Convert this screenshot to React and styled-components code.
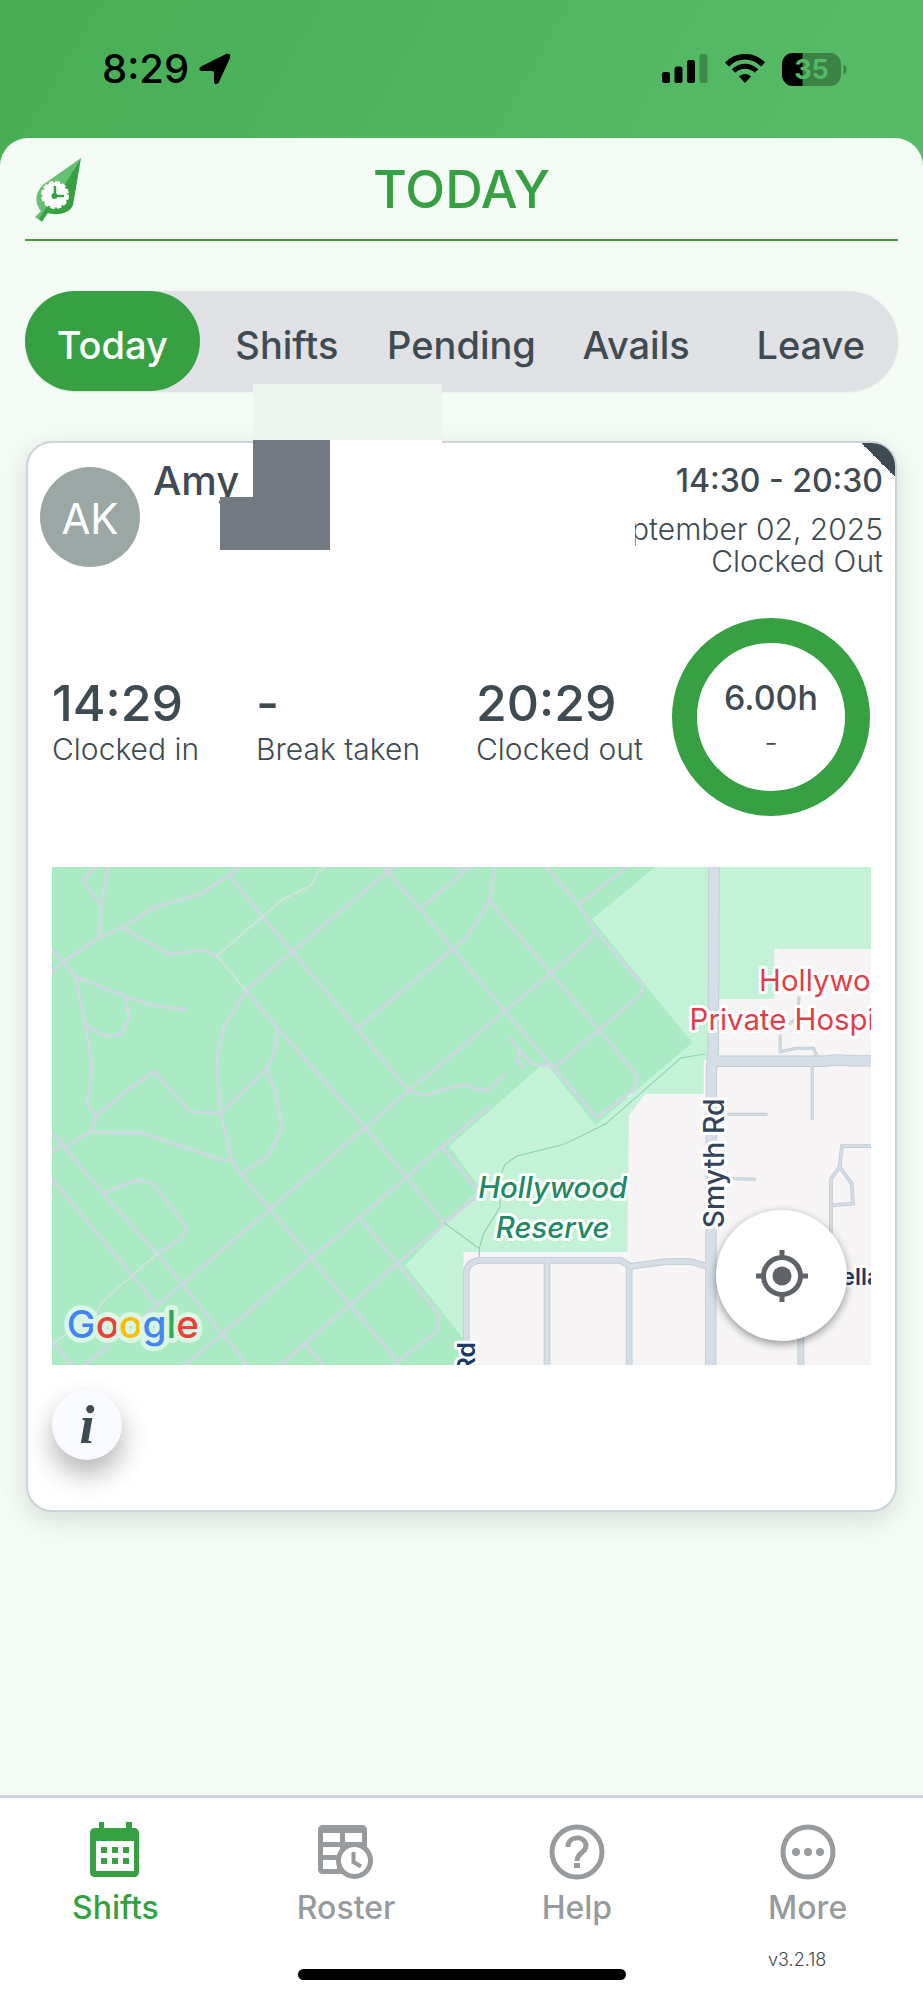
import styled, { createGlobalStyle } from "styled-components";

const GlobalStyle = createGlobalStyle`
  * {
    box-sizing: border-box;
  }

  body {
    margin: 0;
    background: #f4faf4;
    color: #3f4b52;
    font-family: Inter, "Open Sans", sans-serif;
  }

  button {
    border: 0;
    padding: 0;
    background: none;
    color: inherit;
    font: inherit;
    cursor: pointer;
  }
`;

const Screen = styled.div`
  display: flex;
  flex-direction: column;
  min-height: 100vh;
  background: linear-gradient(120deg, #48ae55 0, #56bb67 800px);
`;

const StatusBar = styled.div`
  display: flex;
  align-items: center;
  justify-content: space-between;
  height: 138px;
  padding: 0 76px 0 102px;
  color: #000;
`;

const StatusGroup = styled.div`
  display: flex;
  align-items: center;
  gap: ${(props) => props.$gap}px;
`;

const Clock = styled.span`
  font-size: 40px;
  font-weight: 500;
  line-height: 48px;
`;

const Sheet = styled.main`
  flex: 1;
  display: flex;
  flex-direction: column;
  border-radius: 28px 28px 0 0;
  background: #f4faf4;
`;

const Header = styled.header`
  display: grid;
  grid-template-columns: 68px 1fr 68px;
  align-items: center;
  height: 103px;
  margin: 0 25px;
  padding-top: 2px;
  border-bottom: 2px solid #36a043;

  svg {
    justify-self: center;
  }
`;

const Title = styled.h1`
  margin: 0;
  text-align: center;
  font-size: 52px;
  font-weight: 500;
  line-height: 60px;
  color: #36a043;
`;

const Tabs = styled.nav`
  display: grid;
  grid-template-columns: repeat(5, 1fr);
  height: 100px;
  margin: 50px 25px 0;
  border-radius: 50px;
  background: #e0e1e5;
  box-shadow: 0 1px 2px #0000001c;
`;

const Tab = styled.button`
  padding-top: 8px;
  border-radius: 50px;
  background: ${(props) => (props.$active ? "#36a043" : "transparent")};
  color: ${(props) => (props.$active ? "#fff" : "#3f4b52")};
  font-size: 38px;
  font-weight: 500;
`;

const Card = styled.article`
  position: relative;
  display: flex;
  flex-direction: column;
  margin: 50px 26px 0;
  padding: 24px 24px 50px;
  border: 2px solid #cdd3db;
  border-radius: 26px;
  background: #fff;
  box-shadow: 0 8px 28px #0000001f;
`;

const Corner = styled.span`
  position: absolute;
  top: 0;
  right: 0;
  width: 34px;
  height: 34px;
  border-top-right-radius: 23px;
  background: linear-gradient(45deg, transparent 50%, #3f4b52 50%);
`;

// blocks that hide the surname
const Mask = styled.span`
  position: absolute;
  left: ${(props) => props.$x}px;
  top: ${(props) => props.$y}px;
  width: ${(props) => props.$w}px;
  height: ${(props) => props.$h}px;
  background: ${(props) => props.$color};
`;

const CardTop = styled.div`
  display: flex;
  justify-content: space-between;
  height: 150px;
  margin: 0 -12px;
`;

const Person = styled.div`
  display: flex;
  gap: 13px;
`;

const Avatar = styled.div`
  width: 100px;
  height: 100px;
  border-radius: 50%;
  background: #9aa7a5;
  color: #fff;
  font-size: 42px;
  font-weight: 400;
  line-height: 104px;
  text-align: center;
`;

const Name = styled.h2`
  margin: 0;
  font-size: 40px;
  font-weight: 500;
  line-height: 28px;
`;

const When = styled.div`
  width: 248px;
  text-align: right;
`;

const Hours = styled.div`
  font-size: 32px;
  font-weight: 500;
  line-height: 28px;
  white-space: nowrap;
`;

const DateLine = styled.div`
  display: flex;
  justify-content: flex-end;
  overflow: hidden;
  margin-top: 16px;
  font-size: 30px;
  font-weight: 300;
  line-height: 36px;
  white-space: nowrap;
`;

const State = styled.div`
  font-size: 30px;
  font-weight: 300;
  line-height: 28px;
`;

const Stats = styled.div`
  display: grid;
  grid-template-columns: 204px 220px 1fr 199px;
  align-items: center;
  height: 200px;
`;

const Stat = styled.div`
  padding-top: 12px;
  white-space: nowrap;
`;

const StatValue = styled.div`
  font-size: 50px;
  font-weight: 500;
  line-height: 52px;
`;

const StatLabel = styled.div`
  font-size: 30px;
  font-weight: 300;
  line-height: 40px;
`;

const Ring = styled.div`
  display: flex;
  flex-direction: column;
  align-items: center;
  justify-content: center;
  width: 198px;
  height: 198px;
  padding-top: 6px;
  border: 25px solid #36a043;
  border-radius: 50%;
`;

const RingValue = styled.div`
  font-size: 34px;
  font-weight: 500;
  line-height: 44px;
`;

const RingNote = styled.div`
  font-size: 30px;
  font-weight: 300;
  line-height: 44px;
`;

const MapBox = styled.div`
  position: relative;
  height: 498px;
  margin-top: 50px;

  > svg {
    display: block;
    width: 100%;
    height: 100%;
  }
`;

const LocateButton = styled.button`
  position: absolute;
  right: 24px;
  bottom: 24px;
  display: grid;
  place-items: center;
  width: 131px;
  height: 131px;
  border-radius: 50%;
  background: #fff;
  box-shadow: 0 3px 9px #00000066;
`;

const InfoButton = styled.button`
  width: 70px;
  height: 70px;
  margin-top: 25px;
  border-radius: 50%;
  background: #f9faff;
  box-shadow: 0 14px 28px #0000004d;
  font-family: "Liberation Serif", serif;
  font-size: 54px;
  font-style: italic;
  font-weight: 700;
  line-height: 70px;
`;

const BottomBar = styled.footer`
  margin-top: auto;
  padding-bottom: 20px;
  border-top: 3px solid #cdd1dc;
  background: #fff;
`;

const BottomNav = styled.nav`
  display: grid;
  grid-template-columns: repeat(4, 1fr);
`;

const NavItem = styled.button`
  display: flex;
  flex-direction: column;
  align-items: center;
  padding-top: 20px;
  color: ${(props) => (props.$active ? "#36a043" : "#979b9e")};
  font-size: 32px;
  font-weight: 500;
  line-height: 40px;

  svg {
    margin-bottom: 8px;
  }
`;

const Foot = styled.div`
  display: grid;
  grid-template-columns: 1fr 328px 1fr;
  margin-top: 22px;
`;

const HomeBar = styled.div`
  grid-column: 2;
  height: 11px;
  margin-top: 19px;
  border-radius: 6px;
  background: #000;
`;

const Version = styled.div`
  justify-self: center;
  padding-left: 46px;
  font-size: 18px;
  font-weight: 300;
  line-height: 20px;
`;

function LocationArrow() {
  return (
    <svg width="32" height="32" viewBox="0 0 32 32">
      <path d="M27 1 3 13C-1 15 0 18 3 18H12C14 18 15 18 15 20V28C15 32 18 32 20 29L31 5C32 1 30 0 27 1Z" />
    </svg>
  );
}

function Signal() {
  return (
    <svg width="46" height="30" viewBox="0 0 46 30">
      <rect x="0" y="18" width="8" height="11" rx="2.5" />
      <rect x="12.5" y="12.500" width="8" height="16.500" rx="2.5" />
      <rect x="25" y="6" width="8" height="23" rx="2.5" />
      <rect x="37.5" y="0" width="8" height="29" rx="2.5" opacity=".25" />
    </svg>
  );
}

function Wifi() {
  return (
    <svg width="40" height="30" viewBox="0 0 40 30" fill="none" stroke="#000">
      <path d="M2 10.500C12 0 28 0 38 10.500" strokeWidth="5.500" />
      <path d="M8.500 17C15 10.500 25 10.500 31.500 17" strokeWidth="5" />
      <path d="M14 22.500C17 19 23 19 26 22.500L20 29Z" fill="#000" stroke="none" />
    </svg>
  );
}

function Battery() {
  return (
    <svg width="65" height="33" viewBox="0 0 65 33">
      <defs>
        <clipPath id="charge">
          <rect width="20.500" height="33" />
        </clipPath>
      </defs>
      <rect width="59" height="33" rx="11" opacity=".3" />
      <rect width="59" height="33" rx="11" clipPath="url(#charge)" />
      <path d="M61.500 11.500Q64.500 13 64.500 16.500Q64.500 20 61.500 21.500Z" opacity=".3" />
      <text x="29.500" y="26" textAnchor="middle" fontSize="27" fontWeight="700" fill="#53b964">
        35
      </text>
    </svg>
  );
}

function LeafLogo() {
  return (
    <svg width="48" height="66" viewBox="0 0 48 66">
      <path d="M46 1 9 27C0 35-1 46 6 54L0 60 7 65 13 56Z" fill="#67bf72" />
      <path d="M46 1 38 48C35 56 24 59 12 56L7 64 4 62 11 51L30 27Z" fill="#36a043" />
      <circle cx="20" cy="38" r="12.500" fill="#fff" stroke="#fff" strokeWidth="3" strokeDasharray="4.540 2" />
      <path d="M20 29V39M19 39H29" stroke="#36a043" strokeWidth="2.500" />
      <circle cx="19.500" cy="39" r="3" fill="#36a043" />
    </svg>
  );
}

function CalendarIcon() {
  return (
    <svg width="56" height="62" viewBox="0 -2 56 62" fill="currentColor">
      <path
        fillRule="evenodd"
        d="M12 2h5v6h22V2h6v6h2c3 0 5 2 5 5v39c0 3-2 5-5 5H8c-3 0-5-2-5-5V13c0-3 2-5 5-5h4ZM9 21v30h38V21Z"
      />
      <path d="M14 27h6v6h-6zM25 27h6v6h-6zM36 27h6v6h-6zM14 38h6v6h-6zM25 38h6v6h-6zM36 38h6v6h-6z" />
    </svg>
  );
}

function RosterIcon() {
  return (
    <svg width="56" height="62" viewBox="0 -2 56 62" fill="currentColor">
      <path
        fillRule="evenodd"
        d="M5 5h39c3 0 5 2 5 5v34L40 54H5c-3 0-5-2-5-5V10c0-3 2-5 5-5ZM5 13v9h17v-9ZM27 13v9h17v-9ZM5 27v8h17v-8ZM5 40v9h14v-9Z"
      />
      <circle cx="36.500" cy="40.500" r="16" fill="#fff" stroke="currentColor" strokeWidth="5" />
      <path d="M35.500 32V42L43 46.500" fill="none" stroke="currentColor" strokeWidth="4" />
    </svg>
  );
}

function HelpIcon() {
  return (
    <svg width="56" height="62" viewBox="0 -2 56 62" fill="none" stroke="currentColor" strokeWidth="5">
      <circle cx="28" cy="32" r="25" />
      <path d="M19 27C19 15 37 15 37 26C37 33 28 32 28 41" />
      <path d="M28 43v5" strokeWidth="6" />
    </svg>
  );
}

function MoreIcon() {
  return (
    <svg width="56" height="62" viewBox="0 -2 56 62" fill="currentColor">
      <circle cx="28" cy="32" r="25" fill="none" stroke="currentColor" strokeWidth="5" />
      <circle cx="16" cy="32" r="4" />
      <circle cx="28" cy="32" r="4" />
      <circle cx="40" cy="32" r="4" />
    </svg>
  );
}

function TargetIcon() {
  return (
    <svg width="52" height="52" viewBox="0 0 52 52" fill="none" stroke="#5f6368" strokeWidth="5">
      <circle cx="26" cy="26" r="18.500" />
      <circle cx="26" cy="26" r="9.500" fill="#5f6368" stroke="none" />
      <path d="M26 0v8M26 44v8M0 26h8M44 26h8" />
    </svg>
  );
}

const park =
  "M1845 21 1655 180 1955 548 1665 795 1525 620H1500L1228 858 1320 985 1095 1215 1270 1435V1174H1760L1765 765 1815 702H1988V600H2035V418H2200V268H2490V21Z";

const lanes = [
  "M170 21 130 62 185 138M207 21 185 138 180 234M38 340 70 305 180 234 248 203 345 143 482 103 567 47 600 21",
  "M38 267 107 349 138 494 157 612 152 690 143 730 170 770 152 816 78 860M38 877 66 852",
  "M107 349 257 410 342 438 445 450M257 410 269 473 245 524 194 527 138 494",
  "M248 203 387 283 495 272 532 288M618 392 553 500 531 600 543 760 575 897 604 943 690 1047 814 1194 930 1334 1075 1505",
  "M618 392 712 503 976 803 1100 952 1212 1088 1320 1000",
  "M567 47 667 170 757 276 951 506 1105 693",
  "M618 392 757 276 1043 37 1065 21M1028 21 1140 148 1238 268 1394 454 1540 625 1669 772 1782 688 1792 650 1675 510 1531 340 1348 125 1282 230 1238 268 951 506",
  "M1140 148 1290 21M1250 21 1270 37M1348 125 1364 21M1515 21 1615 135 1662 210 1808 378 1798 407 1675 510 1540 625M1615 135 1760 21M1662 210 1645 245 1531 340 1394 454 1105 693 976 803 690 1047 428 1272 310 1370",
  "M712 503 705 577 680 628 543 760 450 755 344 634 260 693 170 770M680 628 705 690 728 803 684 888 604 943",
  "M152 816 308 819 552 902 575 897",
  "M38 817 190 1000 353 1180 428 1272 547 1420 625 1515M190 1000 291 960 340 970 441 1100 427 1134 353 1180",
  "M38 957 353 1335M210 1455 135 1515M38 1445 100 1515M547 1420 435 1515M547 1420 814 1194 1100 952 1348 738",
  "M720 1515 1072 1210 1320 1000 1205 860M850 1515 795 1450M960 1075 1072 1210 1198 1365 1190 1412 1060 1515",
  "M1105 693 1158 706 1210 688 1268 674 1320 690H1345L1397 642M1405 533 1475 612 1540 620M1440 575 1432 602 1452 627",
];

const footways = [
  "M855 21 835 38 817 76 725 122 532 288 618 392",
  "M353 1180 190 1322 170 1355 40 1450",
];

const trails = [
  "M1212 1088 1317 1165V1190",
  "M1995 582 1921 594 1695 792 1570 853 1430 888 1395 912 1378 950 1380 1040 1330 1120 1317 1165",
];

const streets = [
  { d: "M1278 1515V1240Q1278 1210 1315 1200H1740L1770 1218 1875 1204H1950L2000 1218", w: 20 },
  { d: "M1520 1205V1515M1766 1218V1515M2280 1300V1515", w: 20 },
  { d: "M2020 21 2018 560 2012 640 2010 1515", w: 34 },
  { d: "M2018 604H2350L2390 600 2430 603H2490", w: 34 },
  { d: "M2314 615V780M2060 763H2180M2060 955 2145 957M2218 580V525M2245 494 2270 470 2275 410M2222 575 2265 565H2318L2328 590", w: 9 },
  { d: "M2490 858H2403L2396 920 2370 957V1120M2396 920 2432 970 2436 1030 2370 1036", w: 11 },
];

const google = [
  ["G", "#4285f4"],
  ["o", "#ea4335"],
  ["o", "#fbbc04"],
  ["g", "#4285f4"],
  ["l", "#34a853"],
  ["e", "#ea4335"],
];

const MapLabel = styled.text`
  font-size: ${(props) => props.$size || 88}px;
  font-weight: ${(props) => props.$weight || 400};
  font-style: ${(props) => (props.$italic ? "italic" : "normal")};
  fill: ${(props) => props.$color};
  stroke: ${(props) => props.$halo || "#fff"};
  stroke-width: ${(props) => (props.$halo ? 28 : 18)}px;
  stroke-linejoin: round;
  paint-order: stroke;
`;

function StreetMap() {
  return (
    <svg viewBox="38 21 2452 1494" preserveAspectRatio="xMidYMid slice" fill="none">
      <rect x="38" y="21" width="2452" height="1494" fill="#aaebc4" />
      <path d="M1760 700H1988V418H2200V268H2490V1515H1258V1190L1270 1174H1760Z" fill="#f6f4f5" />
      <path d={park} fill="#c4f2d7" />
      <path d="M1198 1360 1270 1435V1515H1100Z" fill="#aaebc4" />
      {lanes.map((d) => (
        <path key={d} d={d} stroke="#d1d7e2" strokeWidth="9" />
      ))}
      {footways.map((d) => (
        <path key={d} d={d} stroke="#d7e0dc" strokeWidth="5" />
      ))}
      {trails.map((d) => (
        <path key={d} d={d} stroke="#86cdb4" strokeWidth="3" />
      ))}
      {streets.map((s) => (
        <path key={s.d} d={s.d} stroke="#bfcad3" strokeWidth={s.w} />
      ))}
      {streets.map((s) => (
        <path key={s.d} d={s.d} stroke="#d5dee6" strokeWidth={s.w - 5} />
      ))}
      <MapLabel x="2155" y="394" $color="#df3e49">Hollywood</MapLabel>
      <MapLabel x="1947" y="512" $color="#df3e49">Private Hospital</MapLabel>
      <MapLabel x="1537" y="1014" textAnchor="middle" $italic $weight={500} $color="#218966">
        Hollywood
      </MapLabel>
      <MapLabel x="1537" y="1132" textAnchor="middle" $italic $weight={500} $color="#218966">
        Reserve
      </MapLabel>
      <MapLabel transform="translate(2050 1104) rotate(-90)" $size={85} $weight={500} $color="#34445a">
        Smyth Rd
      </MapLabel>
      <MapLabel transform="translate(1304 1538) rotate(-90)" $size={74} $weight={600} $color="#1d3a66">
        Rd
      </MapLabel>
      <MapLabel x="2402" y="1275" $size={68} $weight={600} $color="#1d3a66">ella</MapLabel>
      <MapLabel x="82" y="1434" $size={116} $weight={500} $halo="#daf6e5">
        {google.map(([letter, color], i) => (
          <tspan key={i} fill={color}>{letter}</tspan>
        ))}
      </MapLabel>
    </svg>
  );
}

const tabs = ["Today", "Shifts", "Pending", "Avails", "Leave"];

const stats = [
  { value: "14:29", label: "Clocked in" },
  { value: "-", label: "Break taken" },
  { value: "20:29", label: "Clocked out" },
];

const navItems = [
  { label: "Shifts", Icon: CalendarIcon },
  { label: "Roster", Icon: RosterIcon },
  { label: "Help", Icon: HelpIcon },
  { label: "More", Icon: MoreIcon },
];

function ShiftCard() {
  return (
    <Card>
      <Corner />
      <CardTop>
        <Person>
          <Avatar>AK</Avatar>
          <Name>Amy</Name>
        </Person>
        <When>
          <Hours>14:30 - 20:30</Hours>
          <DateLine>September 02, 2025</DateLine>
          <State>Clocked Out</State>
        </When>
      </CardTop>
      <Stats>
        {stats.map((s) => (
          <Stat key={s.label}>
            <StatValue>{s.value}</StatValue>
            <StatLabel>{s.label}</StatLabel>
          </Stat>
        ))}
        <Ring>
          <RingValue>6.00h</RingValue>
          <RingNote>-</RingNote>
        </Ring>
      </Stats>
      <MapBox>
        <StreetMap />
        <LocateButton aria-label="My location">
          <TargetIcon />
        </LocateButton>
      </MapBox>
      <InfoButton>i</InfoButton>
      <Mask $x={225} $y={-59} $w={189} $h={59} $color="#edf3ef" />
      <Mask $x={225} $y={-3} $w={189} $h={5} $color="#fff" />
      <Mask $x={225} $y={-3} $w={77} $h={110} $color="#727981" />
      <Mask $x={192} $y={54} $w={110} $h={53} $color="#727981" />
    </Card>
  );
}

export default function App() {
  return (
    <>
      <GlobalStyle />
      <Screen>
        <StatusBar>
          <StatusGroup $gap={10}>
            <Clock>8:29</Clock>
            <LocationArrow />
          </StatusGroup>
          <StatusGroup $gap={17}>
            <Signal />
            <Wifi />
            <Battery />
          </StatusGroup>
        </StatusBar>
        <Sheet>
          <Header>
            <LeafLogo />
            <Title>TODAY</Title>
          </Header>
          <Tabs>
            {tabs.map((tab, i) => (
              <Tab key={tab} $active={i === 0}>
                {tab}
              </Tab>
            ))}
          </Tabs>
          <ShiftCard />
          <BottomBar>
            <BottomNav>
              {navItems.map(({ label, Icon }, i) => (
                <NavItem key={label} $active={i === 0}>
                  <Icon />
                  {label}
                </NavItem>
              ))}
            </BottomNav>
            <Foot>
              <HomeBar />
              <Version>v3.2.18</Version>
            </Foot>
          </BottomBar>
        </Sheet>
      </Screen>
    </>
  );
}
